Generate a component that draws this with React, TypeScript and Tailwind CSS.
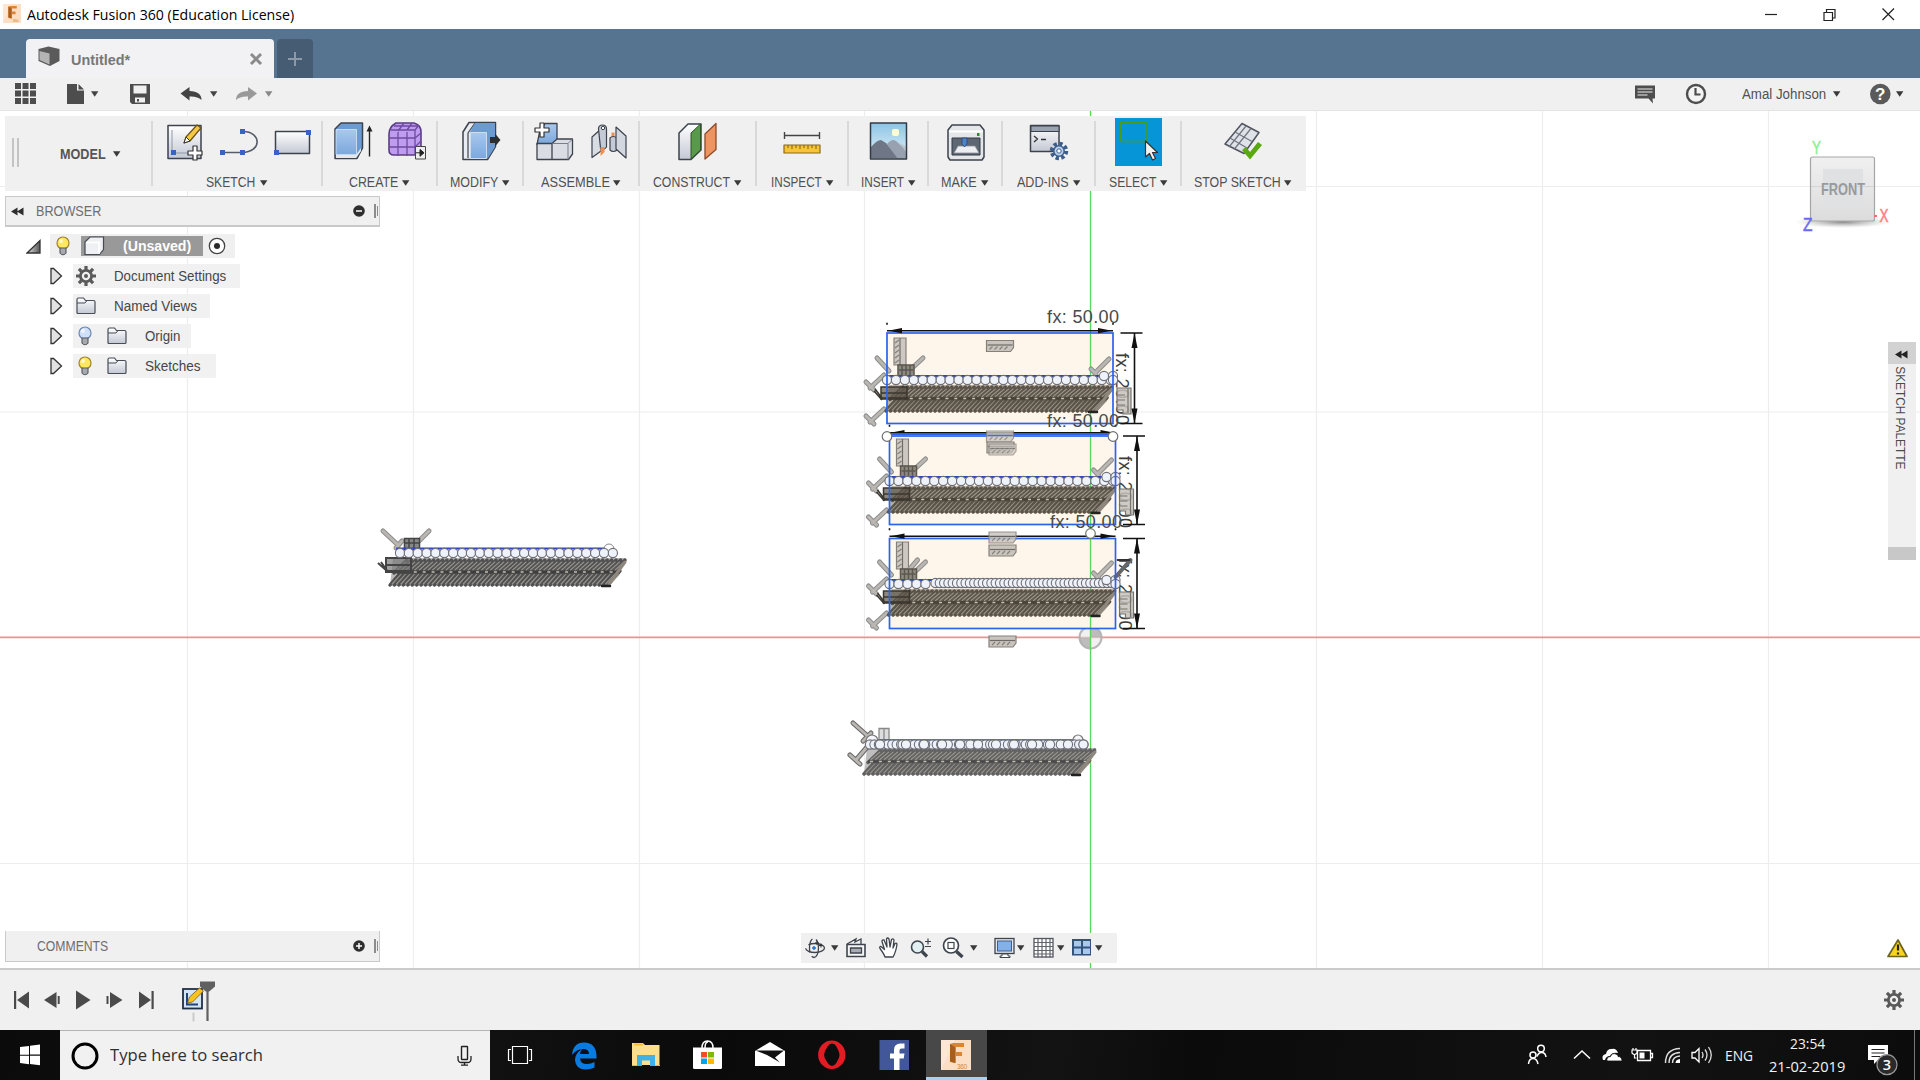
import React, { useLayoutEffect, useRef, useState } from "react";

const ARIAL = "font-['Liberation_Sans',sans-serif]";
const SEGOE = "font-['Open_Sans',sans-serif]";

/* Text condensed or widened to an exact advance width. */
function Fit({ w, className = "", children }: { w: number; className?: string; children: string }) {
  const ref = useRef<HTMLSpanElement>(null);
  const [s, setS] = useState(1);
  useLayoutEffect(() => {
    if (ref.current) setS(w / ref.current.offsetWidth);
  }, [w]);
  return (
    <span className={"block shrink-0 whitespace-nowrap " + className} style={{ width: w }}>
      <span ref={ref} className="inline-block origin-left" style={{ transform: `scaleX(${s})` }}>
        {children}
      </span>
    </span>
  );
}

type IcProps = { x: number; y: number; w: number; h: number; className?: string; children: React.ReactNode };
function Ic({ x, y, w, h, className = "", children }: IcProps) {
  return (
    <svg width={w} height={h} viewBox={`${x} ${y} ${w} ${h}`} className={"block shrink-0 " + className}>
      {children}
    </svg>
  );
}

function Caret({ className = "text-[#3a3a3a]" }: { className?: string }) {
  return (
    <svg width="8" height="6" viewBox="0 0 8 6" className={"block shrink-0 " + className}>
      <path d="M0 0.3H7.4L3.7 5.8Z" fill="currentColor" />
    </svg>
  );
}

function Defs() {
  return (
    <svg width="0" height="0" className="absolute">
      <defs>
        <linearGradient id="gGray" x1="0" y1="0" x2="0" y2="1">
          <stop offset="0" stopColor="#fff" />
          <stop offset="1" stopColor="#c3c8d4" />
        </linearGradient>
        <linearGradient id="gBlue" x1="0" y1="0" x2="0" y2="1">
          <stop offset="0" stopColor="#a9c8ee" />
          <stop offset="1" stopColor="#7ba8dc" />
        </linearGradient>
        <linearGradient id="gCube" x1="0" y1="0" x2="0" y2="1">
          <stop offset="0" stopColor="#f0f0f0" />
          <stop offset="1" stopColor="#dcdcdc" />
        </linearGradient>
        <linearGradient id="gSky" x1="0" y1="0" x2="0" y2="1">
          <stop offset="0" stopColor="#8cc4e6" />
          <stop offset="1" stopColor="#e6f3f8" />
        </linearGradient>
        <linearGradient id="gTri" x1="0" y1="0" x2="1" y2="0">
          <stop offset="0" stopColor="#e5e5e5" />
          <stop offset="1" stopColor="#555" />
        </linearGradient>
        <radialGradient id="gShadow">
          <stop offset="0" stopColor="#555" stopOpacity="0.7" />
          <stop offset="1" stopColor="#999" stopOpacity="0" />
        </radialGradient>
      </defs>
    </svg>
  );
}

/* ---------- sketch canvas ---------- */

function Capsule({ d, c = "#8d8d8d", o = 1 }: { d: string; c?: string; o?: number }) {
  return (
    <g fill="none" strokeLinecap="round" opacity={o}>
      <path d={d} stroke={c} strokeWidth="5" />
      <path d={d} stroke="#bab7b2" strokeWidth="3" />
    </g>
  );
}

function Mass({ x0, x1, top, bottom, color, dash }: { x0: number; x1: number; top: number; bottom: number; color: string; dash: string }) {
  const mid = (top + bottom) / 2;
  const rows: React.ReactNode[] = [];
  for (let x = x0; x < x1 - 14; x += 4.45) {
    const k = Math.round((x - x0) / 4.45);
    rows.push(
      <g key={k}>
        <path d={`M${x} ${bottom - 2}L${x + 12} ${mid - 1}`} stroke={color} strokeWidth="3.4" />
        <path d={`M${x + 2} ${bottom - 3}L${x + 11} ${mid + 2.5}`} stroke="#aaa59c" strokeWidth="1.1" opacity="0.8" />
        <path d={`M${x + 4} ${mid + 1}L${x + 17} ${top + 3}`} stroke={color} strokeWidth="3.4" />
        <path d={`M${x + 7} ${mid - 2}L${x + 16} ${top + 5}`} stroke="#aaa59c" strokeWidth="1.1" opacity="0.8" />
      </g>
    );
  }
  return (
    <g strokeLinecap="round">
      <path d={`M${x0 + 3} ${top + 1}H${x1}L${x1 - 17} ${bottom - 1}H${x0}Z`} fill={color} opacity="0.4" />
      {rows}
      <path d={`M${x0 + 4} ${mid}H${x1 - 10}`} stroke={dash} strokeWidth="2.4" strokeLinecap="butt" opacity="0.8" />
      <path d={`M${x0 + 6} ${mid}H${x1 - 10}`} stroke="#c4bfb5" strokeWidth="1.4" strokeLinecap="butt" strokeDasharray="3 5.9" />
      <path d={`M${x1 - 1} ${top + 5}L${x1 - 17} ${bottom - 3}`} stroke="#8d877d" strokeWidth="3" />
      <path d={`M${x1 - 24} ${bottom - 1}h8`} stroke="#222" strokeWidth="2.5" />
    </g>
  );
}

function Horiz({ x, y, o = 1 }: { x: number; y: number; o?: number }) {
  return (
    <g opacity={o} stroke="#85807a" strokeWidth="1.2">
      <path d={`M${x} ${y}h27v7l-3 4h-24z`} fill="#c9c5be" />
      <path d={`M${x + 1} ${y + 4.5}h25`} stroke="#6f6b66" />
      <path d={`M${x + 3} ${y + 9}l3-3M${x + 8} ${y + 9}l3-3M${x + 13} ${y + 9}l3-3M${x + 18} ${y + 9}l3-3`} />
    </g>
  );
}

function Vert({ x, y, h }: { x: number; y: number; h: number }) {
  const t: string[] = [];
  for (let i = 3; i < h - 2; i += 5) t.push(`M${x + 1} ${y + i + 2}l4-3`);
  return (
    <g stroke="#85807a" strokeWidth="1.2">
      <path d={`M${x} ${y}h12v${h}h-12z`} fill="#cdc9c2" />
      <path d={`M${x + 6} ${y}v${h}`} stroke="#6f6b66" />
      <path d={t.join("")} />
    </g>
  );
}

function Row({ from, to, y, step, r = 4.6 }: { from: number; to: number; y: number; step: number; r?: number }) {
  const out: React.ReactNode[] = [];
  for (let x = from; x <= to + 0.5; x += step) out.push(<circle key={x} cx={x} cy={y} r={r} />);
  return (
    <g fill="#eef2fb" stroke="#6f6f76" strokeWidth="1.1">
      {out}
    </g>
  );
}

/* One constrained rectangle with its dimensions and constraint glyphs. */
function Block({ x, top, bottom, row, dense, tx, ty }: { x: number; top: number; bottom: number; row: number; dense?: boolean; tx: number; ty: number }) {
  const r = x + 226;
  const dx = x === 887 ? 1134.5 : 1137;
  const ay = row === 481 ? 432.7 : top - 2.3;
  return (
    <g>
      <rect x={x} y={top} width="226" height={bottom - top} fill="#fff6eb" />
      <path d={`M1090.5 ${top}V${bottom}`} stroke="#59d959" strokeWidth="1.3" />
      <text transform={`translate(${r + 3} ${top + 20}) rotate(90)`} textLength="72" className={ARIAL} fontSize="18" fill="#3c3c3c">fx: 20.00</text>
      <Vert x={x + 7} y={row - 42} h={27} />
      <Capsule d={`M${x - 10} ${row - 22}l12 13`} />
      <Capsule d={`M${x + 36} ${row - 22}l-14 13`} />
      {dense && <Capsule d={`M${x + 28} ${row - 24}l-12 14`} />}
      <Capsule d={`M${r - 4} ${row - 21}l-14 14M${r - 22} ${row - 11}l5 5`} />
      <g stroke="#5c5850" strokeWidth="1.5" fill="#8f8a80">
        <path d={`M${x + 11} ${row - 15}h16v11h-16z`} />
        <path d={`M${x + 15} ${row - 15}v11M${x + 19} ${row - 15}v11M${x + 23} ${row - 15}v11M${x + 12} ${row - 10}h14`} />
      </g>
      <Capsule d={`M${x - 3} ${row - 5}l-14 13M${x - 21} ${row + 2}l8 8`} />
      <Capsule d={`M${x - 3} ${row + 29}l-14 13M${x - 21} ${row + 36}l8 8`} />
      <Mass x0={x - 1} x1={r} top={row + 4} bottom={row + 33} color="#5b5347" dash="#453e34" />
      <g stroke="#3b3731" fill="none" strokeWidth="1.5">
        <path d={`M${x - 6} ${row + 7}h26v12h-26z`} fill="#5b5347" fillOpacity=".7" />
        <path d={`M${x - 12} ${row + 9}l7 9h25M${x - 6} ${row + 13}h26M${x - 13} ${row + 11}l8 9`} />
      </g>
      <path d={`M${x} ${row - 4}H${r}`} stroke="#2c45c8" strokeWidth="2" />
      {dense ? (
        <>
          <Row from={x} to={x + 42} y={row} step={9} />
          <Row from={x + 46} to={r} y={row - 1} step={4.3} />
        </>
      ) : (
        <Row from={x} to={r} y={row} step={8.95} />
      )}
      <g fill="#eef2fb" stroke="#6f6f76" strokeWidth="1.1">
        <circle cx={r - 9} cy={row - 4} r="4.6" />
        <circle cx={r} cy={row - 4} r="4.6" />
        <circle cx={r} cy={row} r="4.6" />
      </g>
      <g stroke="#77736d" strokeWidth="1.2" fill="#c5c1bb">
        <path d={`M${r + 4} ${row + 8}h14v26h-8v-4h-6z`} fillOpacity=".85" />
        <path d={`M${r + 15} ${row + 8}v25M${r + 4} ${row + 15}h8M${r + 4} ${row + 20}h8M${r + 4} ${row + 25}h8`} />
      </g>
      {dense && (
        <g strokeLinecap="round">
          <path d={`M${r + 15} ${row - 24}l-15 17`} stroke="#666" strokeWidth="4" />
          <path d={`M${r + 2} ${row - 24}h12`} stroke="#333" strokeWidth="2" />
        </g>
      )}
      <rect x={x} y={top} width="226" height={bottom - top} fill="none" stroke="#2d62f0" strokeWidth="1.7" />
      <g stroke="#111" strokeWidth="1.6" fill="#111">
        <path d={`M${x} ${ay}H${r}`} />
        <path d={`M${x + 1} ${ay}l14-2.6v5.2zM${r - 1} ${ay}l-14-2.6v5.2z`} stroke="none" />
        <path d={`M${dx} ${top}V${bottom}M${dx - 14} ${top}h22M${dx - 14} ${bottom}h22`} />
        <path d={`M${dx} ${top}l-3 15h6zM${dx} ${bottom}l-3-15h6z`} stroke="none" />
        <path d={`M${x} ${ay - 8}v2M${r} ${ay - 8}v2`} />
      </g>
      <text x={tx} y={ty} textLength="72" className={ARIAL} fontSize="18" fill="#4a4a4a">fx: 50.00</text>
    </g>
  );
}

function Canvas() {
  return (
    <svg width="1920" height="857" viewBox="0 111 1920 857" className="absolute inset-0 block">
      <rect x="0" y="111" width="1920" height="857" fill="#fff" />
      <path
        d="M187.5 111V968M413.5 111V968M639.5 111V968M864.5 111V968M1316.5 111V968M1542.5 111V968M1768.5 111V968M0 186.5H1920M0 412H1920M0 863.5H1920"
        stroke="#ededed"
        strokeWidth="1.2"
      />
      <path d="M1090.5 111V968" stroke="#59d959" strokeWidth="1.3" />
      <path d="M0 637.3H1920" stroke="#e89494" strokeWidth="1.8" />
      <g opacity=".9">
        <circle cx="1090.5" cy="637.5" r="11" fill="#ececec" fillOpacity=".8" stroke="#b0b0b0" strokeWidth="2" />
        <path d="M1090.5 637.5V627A11 11 0 0 1 1101.5 637.500ZM1090.5 637.500V648.500A11 11 0 0 1 1079.5 637.500Z" fill="#a8a8a8" opacity=".8" />
      </g>
      <path d="M1090.5 626V650" stroke="#59d959" strokeWidth="1.3" />

      <Block x={887} top={333} bottom={423.5} row={380} tx={1047} ty={323} />
      <Horiz x={986.5} y={340.5} />
      <Block x={889.5} top={436} bottom={524.5} row={481} tx={1047} ty={426.5} />
      <path d="M887 434H1113" stroke="#2d62f0" strokeWidth="2" />
      <g fill="#fff" stroke="#6f6f76" strokeWidth="1.2">
        <circle cx="887" cy="436.5" r="4.8" />
        <circle cx="1113" cy="436.5" r="4.8" />
      </g>
      <Horiz x={986.5} y={431} o={0.8} />
      <Horiz x={987} y={442} />
      <Horiz x={989} y={444} o={0.7} />
      <Block x={889.5} top={538.5} bottom={628.5} row={584} dense tx={1050} ty={528} />
      <Horiz x={989} y={532} o={0.85} />
      <Horiz x={989} y={545} />
      <Horiz x={989} y={636} />
      <circle cx="1090.5" cy="533.5" r="4.8" fill="#fff" stroke="#6c7a6c" strokeWidth="1.2" />

      <Capsule d="M383 531l15 14M396 548l6-7" />
      <Capsule d="M429 531l-12 12" />
      <g stroke="#444" strokeWidth="1.5" fill="#888">
        <path d="M404.500 538.500h15v11h-15zM409 538v11M414 538v11M405 543h14" />
      </g>
      <Mass x0={390} x1={626} top={557} bottom={587} color="#505050" dash="#3a3a3a" />
      <g fill="none" stroke="#444" strokeWidth="2">
        <path d="M386 558h25v14h-25z" fill="#777" fillOpacity=".7" />
        <path d="M378 563l9 8h24M386 565h25M381 562l7 10" />
      </g>
      <path d="M396 548.500H607" stroke="#2c45c8" strokeWidth="2" />
      <circle cx="609" cy="549" r="5" fill="#fff" stroke="#888" />
      <Row from={400} to={614} y={553} step={8.87} />

      <Capsule d="M853 723l18 16M863 741l8-8" c="#666" />
      <Capsule d="M868 746l-12 14M850 755l10 9" c="#666" />
      <path d="M879 728.500h10v12h-10zM884 729v11" fill="#ddd" stroke="#888" strokeWidth="1.3" />
      <Mass x0={864} x1={1096} top={747} bottom={776} color="#606060" dash="#444" />
      <path d="M880 740H1076" stroke="#2c45c8" strokeWidth="1.6" />
      <g fill="#f4f6fb" stroke="#777" strokeWidth="1.2">
        <circle cx="872" cy="741" r="6" />
        <circle cx="1078" cy="740" r="5" />
      </g>
      <Row from={870} to={1084} y={744.5} step={4.45} />
      <Row from={880} to={1084} y={744.5} step={22.6} />
      <Row from={906} to={1084} y={744.5} step={18} />
    </svg>
  );
}

function ViewCube() {
  return (
    <svg width="100" height="110" viewBox="1796 132 100 110" className="absolute left-[1796px] top-[21px] block">
      <ellipse cx="1843" cy="222" rx="48" ry="6" fill="url(#gShadow)" />
      <rect x="1810.500" y="157" width="64" height="64" rx="2" fill="url(#gCube)" stroke="#a5a5a5" strokeWidth="1.2" />
      <rect x="1823" y="169" width="40" height="39" fill="#dfe1e3" />
      <path d="M1811 186.500h63" stroke="#d4d4d4" />
      <g className={ARIAL} fontWeight="bold">
        <text x="1821" y="195" fontSize="16.500" fill="#979a9e" textLength="44" lengthAdjust="spacingAndGlyphs">FRONT</text>
      </g>
      <g className={ARIAL} fontSize="18">
        <text x="1812" y="154" fill="#8df08d" stroke="#8df08d" strokeWidth=".5" textLength="9" lengthAdjust="spacingAndGlyphs">Y</text>
        <text x="1879.500" y="222" fill="#ff8080" stroke="#ff8080" strokeWidth=".5" textLength="9" lengthAdjust="spacingAndGlyphs">X</text>
        <text x="1803" y="231" fill="#6a6af0" stroke="#6a6af0" strokeWidth=".5" textLength="9.500" lengthAdjust="spacingAndGlyphs">Z</text>
      </g>
      <path d="M1874 216h3" stroke="#f66" strokeWidth="2" />
    </svg>
  );
}

/* ---------- ribbon ---------- */

function R({ x, w, className = "", children }: { x: number; w: number; className?: string; children: React.ReactNode }) {
  return (
    <Ic x={x} y={118} w={w} h={48} className={className}>
      <g strokeLinejoin="round">{children}</g>
    </Ic>
  );
}

function Group({ width, label, lw, children, last }: { width: string; label: string; lw: number; children: React.ReactNode; last?: boolean }) {
  return (
    <div className={`${width} relative flex shrink-0 flex-col`}>
      {!last && <span className="absolute right-0 top-[5px] h-[65px] w-[2px] bg-[#d9d9d9]" />}
      <div className="mt-[2px] flex h-12">{children}</div>
      <div className="mt-[4px] flex h-[25px] items-center justify-center gap-[4px] pr-[2px] pt-[2px]">
        <Fit w={lw} className={`${ARIAL} text-[14px] text-[#505050]`}>{label}</Fit>
        <Caret />
      </div>
    </div>
  );
}

function Ribbon() {
  const k = "#3d434d";
  return (
    <div className="ml-[5px] mt-[5px] flex h-[75px] w-[1301px] shrink-0 bg-[#f0f0f0]">
      <div className="relative flex w-[148px] shrink-0 items-center">
        <span className="ml-[7px] mb-[2px] h-[29px] w-[2px] bg-[#c4c4c4]" />
        <span className="ml-[3px] mb-[2px] h-[29px] w-[2px] bg-[#c4c4c4]" />
        <Fit w={46} className={`${ARIAL} ml-[41px] mt-[2px] text-[14px] font-bold text-[#555]`}>MODEL</Fit>
        <Caret className="ml-[7px] text-[#3a3a3a]" />
        <span className="absolute right-0 top-[5px] h-[65px] w-[2px] bg-[#d9d9d9]" />
      </div>
      <Group width="w-[170px]" label="SKETCH" lw={49.5}>
        <R x={165} w={40} className="ml-[12px]">
          <rect x="168" y="125.500" width="33" height="33" fill="url(#gGray)" stroke={k} strokeWidth="1.500" />
          <path d="M172 130v23h20" fill="none" stroke="#8f98aa" />
          <path d="M171 150h5v5h-5z" fill="#3465c0" />
          <path d="M184 143l2-6 11-12 4 3-11 13z" fill="#f5c842" stroke="#6b4f18" strokeWidth="1.200" />
          <path d="M184 143l2-6 4 4z" fill="#fff" stroke="#333" />
          <path d="M193 146h4v5h5v4h-5v5h-4v-5h-5v-4h5z" fill="#fff" stroke="#333" strokeWidth="1.200" />
        </R>
        <R x={218} w={42} className="ml-[13px]">
          <path d="M222 152.500h20c20 0 20-21 1-21" fill="none" stroke="#555d68" strokeWidth="1.600" />
          <path d="M220 150h5v5h-5zM240 150h5v5h-5zM240 129h5v5h-5z" fill="#3465c0" />
        </R>
        <R x={271} w={44} className="ml-[11px]">
          <rect x="275.500" y="131.500" width="34" height="22" fill="url(#gGray)" stroke={k} strokeWidth="1.500" />
          <path d="M306 130h5v5h-5zM274 150h5v5h-5z" fill="#3465c0" />
        </R>
      </Group>
      <Group width="w-[115px]" label="CREATE" lw={49.5}>
        <R x={332} w={44} className="ml-[9px]">
          <path d="M335 129l6-6h21.500v25l-5.500 10.500h-22z" fill="#6c9bd2" stroke={k} strokeWidth="1.500" />
          <path d="M336 129.500h20.500v25h-20.500z" fill="url(#gBlue)" stroke="#d7e6f8" strokeWidth=".8" />
          <path d="M336 155h20l5-7v3l-5 7h-20z" fill="#e6e8ec" />
          <path d="M369.500 156.500v-27" stroke="#222" strokeWidth="1.400" />
          <path d="M366.500 131.500l3-6 3 6z" fill="#222" />
        </R>
        <R x={386} w={42} className="ml-[10px]">
          <path d="M389 134q0-7 7-11h18q7 2 7 9v14l-5 9h-22q-5 0-5-5z" fill="#bf9cf0" stroke="#5a3c84" strokeWidth="1.600" />
          <path d="M389 138h26l6-5M389 147h26l6-6M398 132v24M407 132v24M391 130h24v25M398 131l6-8M407 130l5-7M415 130l4-5M394 126h24" fill="none" stroke="#6f4aa0" strokeWidth="1.300" />
          <rect x="415.500" y="146.500" width="10" height="12.500" fill="#eee" stroke="#444" />
          <path d="M416 152.800h4M420 149.500l4 3.300-4 3.500z" fill="#222" stroke="#222" />
        </R>
      </Group>
      <Group width="w-[86px]" label="MODIFY" lw={48}>
        <R x={458} w={46} className="ml-[20px]">
          <path d="M463 132l6-9.500h26.500v24l-8 13h-24.500z" fill="#e9ecf1" stroke={k} strokeWidth="1.500" />
          <path d="M468 158l0-25 7-10" fill="none" stroke={k} strokeWidth="1.200" />
          <path d="M470 132l5-9h20v24l-7 11h-18z" fill="#6c9bd2" />
          <path d="M470.500 132.500h16v26h-16z" fill="url(#gBlue)" stroke="#dce9fa" strokeWidth=".8" />
          <path d="M490 137h5v-3.500l5.500 6.500-5.500 6.500v-3.500h-5z" fill="#2e2e2e" />
        </R>
      </Group>
      <Group width="w-[116px]" label="ASSEMBLE" lw={68.5}>
        <R x={533} w={44} className="ml-[9px]">
          <path d="M540 130l5-6.500h12v16l-2 5h-18z" fill="url(#gBlue)" stroke={k} strokeWidth="1.300" />
          <path d="M537 143.500h15v16h-15zM552 143.500l5-4.500h15.500v15l-4 5.500h-16.500z" fill="#dadde4" stroke={k} strokeWidth="1.300" />
          <path d="M552.500 143.500h15.500v16M568 143.500l4-4" fill="none" stroke="#777e8a" />
          <path d="M540 123h4v5h5v4h-5v5h-4v-5h-5v-4h5z" fill="#fff" stroke="#333" strokeWidth="1.200" />
        </R>
        <R x={589} w={42} className="ml-[12px]">
          <path d="M592 137l9-8v22l-9 6.500z" fill="#d8dce3" stroke={k} strokeWidth="1.200" />
          <path d="M598.500 129q0-4 4-4t4 4v18q-3 4-6 1z" fill="#c5cbd6" stroke={k} strokeWidth="1.200" />
          <circle cx="603" cy="128" r="1.700" fill="#fff" stroke={k} />
          <path d="M600.500 147h4v5l-4 4zM611.500 132.500h3v6h-3z" fill="#ee8f4e" />
          <path d="M610 138q3-3 7 0v12q-4 3-7 0z" fill="#c5cbd6" stroke={k} strokeWidth="1.200" />
          <path d="M616 127l10 9v22l-10-9z" fill="#d3d7df" stroke={k} strokeWidth="1.200" />
        </R>
      </Group>
      <Group width="w-[117px]" label="CONSTRUCT" lw={77}>
        <R x={676} w={44} className="ml-[36px]">
          <path d="M679 133l9-9h13v26l-10 9.500h-12z" fill="url(#gGray)" stroke={k} strokeWidth="1.500" />
          <path d="M691 133l9.500-9v26l-9.500 9z" fill="#59994a" stroke="#2c5722" />
          <path d="M705 134l11-10.500v26l-11 9.500z" fill="#ee9461" stroke="#8c4a2a" strokeWidth="1.300" />
        </R>
      </Group>
      <Group width="w-[92px]" label="INSPECT" lw={51}>
        <R x={780} w={44} className="ml-[23px]">
          <path d="M784.500 132v7M819.500 132v7M784 135.500h36" stroke="#444" strokeWidth="1.400" />
          <rect x="784" y="145" width="36" height="8" fill="#f7c436" stroke="#8a6a1c" strokeWidth="1.200" />
          <path d="M788 145v3M792 145v4M796 145v3M800 145v4M804 145v3M808 145v4M812 145v3M816 145v4" stroke="#7c5f14" />
        </R>
      </Group>
      <Group width="w-[80px]" label="INSERT" lw={43}>
        <R x={868} w={42} className="ml-[19px]">
          <rect x="870.500" y="123" width="36" height="36" fill="url(#gSky)" />
          <rect x="892" y="129" width="7" height="7" rx="2" fill="#fffbd8" />
          <path d="M871 147q6-7 10-7l5 3 13 15.500h-28z" fill="#6f7787" />
          <path d="M887 144q5-6 9-3l10 9v9h-8z" fill="#98a1b0" />
          <path d="M899 142l7 5v5z" fill="#bcc4ce" />
          <rect x="870.500" y="123" width="36" height="36" fill="none" stroke="#333b46" strokeWidth="1.500" />
        </R>
      </Group>
      <Group width="w-[74px]" label="MAKE" lw={36}>
        <R x={945} w={42} className="ml-[16px]">
          <path d="M948 130l4-5h28l4 5v27l-2 3h-32l-2-3z" fill="#e4e6ea" stroke={k} strokeWidth="1.500" />
          <path d="M949 131.500h34" stroke="#fff" strokeWidth="2" />
          <path d="M977 133h2.500v3h-2.500z" fill="#2f8a2f" />
          <rect x="952" y="138" width="28" height="17" fill="#5d6673" stroke="#343a44" />
          <path d="M958 146h17l4 7h-25z" fill="#eceef2" stroke="#8a909a" strokeWidth=".8" />
          <path d="M962 138h5v6l-2.500 3-2.500-3z" fill="#4e83c9" stroke="#27497a" strokeWidth=".8" />
        </R>
      </Group>
      <Group width="w-[93px]" label="ADD-INS" lw={52}>
        <R x={1027} w={44} className="ml-[24px]">
          <rect x="1030.500" y="125.500" width="28.500" height="26" fill="url(#gGray)" stroke={k} strokeWidth="1.500" />
          <path d="M1031 126h28v5.500h-28z" fill="#9aa1b0" stroke={k} />
          <path d="M1034 136l3.500 3-3.500 3M1041 139.500h5" fill="none" stroke="#333" strokeWidth="1.300" />
          <circle cx="1059" cy="151" r="7" fill="none" stroke="#3c5d8b" strokeWidth="4.500" strokeDasharray="3.200 2.300" />
          <circle cx="1059" cy="151" r="5.200" fill="#bcd4ee" stroke="#3c5d8b" strokeWidth="1.500" />
          <circle cx="1059" cy="151" r="2.200" fill="#fff" stroke="#3c5d8b" />
        </R>
      </Group>
      <Group width="w-[86px]" label="SELECT" lw={47}>
        <R x={1115} w={47} className="ml-[19px] bg-[#0696d7]">
          <rect x="1120.500" y="122.500" width="25.500" height="19" fill="none" stroke="#4c9a1c" strokeWidth="1.600" />
          <path d="M1145.500 141v16l4-3.500 3 6.500 3-1.500-3-6h5z" fill="#f2f2f2" stroke="#333" strokeWidth="1.200" />
        </R>
      </Group>
      <Group width="w-[124px]" label="STOP SKETCH" lw={86.5} last>
        <R x={1222} w={44} className="ml-[39px]">
          <path d="M1226 144l17-20.500 17 9-15 21z" fill="#dfe2e9" stroke="#50555f" strokeWidth="1.500" />
          <path d="M1230 147l17-21M1235 149.500l17-21M1231 138l17 10M1236 132l17 9.500" fill="none" stroke="#70757f" strokeWidth="1.200" />
          <path d="M1243 150l4-3 4 5 8-10 4 3-12 14.500z" fill="#5aa80f" />
        </R>
      </Group>
    </div>
  );
}

/* ---------- browser ---------- */

function Bulb({ on }: { on: boolean }) {
  return (
    <Ic x={0} y={0} w={14} h={20}>
      <circle cx="7" cy="7" r="6" fill={on ? "#ffe85e" : "#cfe0fb"} stroke={on ? "#a08428" : "#6f87ae"} strokeWidth="1.200" />
      <path d="M4 12h6v5q-3 3.500-6 0z" fill="#a6a9ad" stroke="#55585c" strokeWidth="1.100" />
      <circle cx="5" cy="5" r="2" fill="#fff" opacity=".7" />
    </Ic>
  );
}
function Folder() {
  return (
    <Ic x={0} y={0} w={20} h={18}>
      <path d="M1 2.500q0-1.500 1.500-1.500h5l2 2.500h8q1.500 0 1.500 1.500v10.500q0 1-1 1h-16q-1 0-1-1z" fill="url(#gGray)" stroke="#474d57" strokeWidth="1.200" />
      <path d="M1 6h8l2-2.500" fill="none" stroke="#474d57" />
    </Ic>
  );
}
function Gear({ size }: { size: number }) {
  return (
    <svg width={size} height={size} viewBox="0 0 20 20" className="block shrink-0">
      <path d="M10 0v4M10 16v4M0 10h4M16 10h4M2.900 2.900l3 3M14.100 14.100l3 3M17.100 2.900l-3 3M5.900 14.100l-3 3" stroke="#5a5a5a" strokeWidth="3.200" />
      <circle cx="10" cy="10" r="5.600" fill="#f0f0f0" stroke="#5a5a5a" strokeWidth="2.800" />
      <circle cx="10" cy="10" r="2" fill="#5a5a5a" />
    </svg>
  );
}
function Expander() {
  return (
    <Ic x={0} y={0} w={13} h={18}>
      <path d="M1 1.500h2.500l8 7.500-8 7.500h-2.500z" fill="#e2e2e2" stroke="#333" strokeWidth="1.300" />
    </Ic>
  );
}
function TreeRow({ width, children }: { width: string; children: React.ReactNode }) {
  return (
    <div className="flex h-6 items-center">
      <div className="ml-[45px] w-[23px]"><Expander /></div>
      <div className={`${width} flex h-full items-center bg-[#f0f0f0]/95`}>{children}</div>
    </div>
  );
}
const TREE_TEXT = `${ARIAL} text-[14px] text-[#464646]`;

function PanelBars() {
  return (
    <span className="flex gap-[1px]">
      <span className="h-[14px] w-[2px] bg-[#8c8c8c]" />
      <span className="h-[10px] w-[1px] self-center bg-[#8c8c8c]" />
    </span>
  );
}

function Browser() {
  return (
    <div className="ml-[5px] mt-[5px] w-[375px]">
      <div className="flex h-[31px] items-center border border-b-2 border-[#c9c9c9] bg-[#f0f0f0]">
        <Ic x={0} y={0} w={13} h={9} className="ml-[5px]">
          <path d="M6.500 .5v8L0 4.500zM12.500 .5v8L6 4.500z" fill="#2e2e2e" />
        </Ic>
        <Fit w={65} className={`${ARIAL} ml-[12px] text-[14px] text-[#6e6e6e]`}>BROWSER</Fit>
        <Ic x={0} y={0} w={12} h={12} className="ml-auto mr-[9px]">
          <circle cx="6" cy="6" r="5.800" fill="#2f2f2f" />
          <path d="M3 6h6" stroke="#fff" strokeWidth="1.500" />
        </Ic>
        <PanelBars />
        <span className="w-px" />
      </div>
      <div className="mt-[7px] flex flex-col gap-[6px]">
        <div className="flex h-6 items-center">
          <Ic x={0} y={0} w={15} h={15} className="ml-[21px]">
            <path d="M1 14L14 1.500V14z" fill="url(#gTri)" stroke="#333" strokeWidth="1.300" />
          </Ic>
          <div className="ml-[9px] flex h-full w-[185px] items-center bg-[#f0f0f0]">
            <div className="ml-[6px]"><Bulb on /></div>
            <div className="ml-[11px] flex h-[20px] w-[122px] items-center bg-[#999]">
              <Ic x={0} y={0} w={21} h={20} className="ml-[3px]">
                <path d="M1 6l5-5h13.500v12.500l-4 5h-14.500z" fill="#eef0f3" stroke="#444b55" strokeWidth="1.200" />
                <path d="M2 6.500h13v11.500" fill="none" stroke="#fff" strokeWidth="1.500" />
              </Ic>
              <Fit w={68.5} className={`${ARIAL} ml-[18px] text-[14px] font-bold text-white`}>(Unsaved)</Fit>
            </div>
            <Ic x={0} y={0} w={18} h={18} className="ml-[5px]">
              <circle cx="9" cy="9" r="7.700" fill="#fff" stroke="#444" strokeWidth="1.300" />
              <circle cx="9" cy="9" r="3" fill="#2b2b2b" />
            </Ic>
          </div>
        </div>
        <TreeRow width="w-[167px]">
          <div className="ml-[3px]"><Gear size={20} /></div>
          <Fit w={112} className={`${TREE_TEXT} ml-[18px]`}>Document Settings</Fit>
        </TreeRow>
        <TreeRow width="w-[137px]">
          <div className="ml-[3px]"><Folder /></div>
          <Fit w={83} className={`${TREE_TEXT} ml-[18px]`}>Named Views</Fit>
        </TreeRow>
        <TreeRow width="w-[118px]">
          <div className="ml-[5px]"><Bulb on={false} /></div>
          <div className="ml-[15px]"><Folder /></div>
          <Fit w={35} className={`${TREE_TEXT} ml-[18px]`}>Origin</Fit>
        </TreeRow>
        <TreeRow width="w-[143px]">
          <div className="ml-[5px]"><Bulb on /></div>
          <div className="ml-[15px]"><Folder /></div>
          <Fit w={56} className={`${TREE_TEXT} ml-[18px]`}>Sketches</Fit>
        </TreeRow>
      </div>
    </div>
  );
}

function NavBar() {
  const s = "#3f454e";
  return (
    <div className="ml-[421px] mt-[2px] flex h-[30px] w-[316px] shrink-0 items-center bg-[#f0f0f0]">
      <Ic x={804} y={937} w={22} h={22} className="ml-[3px]">
        <ellipse cx="815" cy="948" rx="9.500" ry="4.500" fill="none" stroke={s} strokeWidth="1.300" strokeDasharray="22 5" />
        <ellipse cx="814" cy="948" rx="4.500" ry="9.500" fill="none" stroke={s} strokeWidth="1.300" strokeDasharray="14 4" />
        <path d="M812 948h4M814 946v4" stroke="#1f6fd0" strokeWidth="1.400" />
        <path d="M815 943h4M817 941v4M819 945.500h4M821 943.500v4" stroke="#333" strokeWidth="1" />
      </Ic>
      <Caret className="ml-[5px] text-[#3a3a3a]" />
      <Ic x={845} y={937} w={22} h={22} className="ml-[6px]">
        <path d="M847 944.500h18v12h-18z" fill="#f6f6f6" stroke={s} strokeWidth="1.600" />
        <path d="M850.500 948h11v5h-11z" fill="#a9adb3" stroke={s} strokeWidth="1.300" />
        <path d="M847 944l9-5-1 3 6-3v5" fill="none" stroke={s} strokeWidth="1.300" />
      </Ic>
      <Ic x={878} y={937} w={22} h={22} className="ml-[11px]">
        <path d="M885 957q-1-3-5-8.500-1-2 1-2l3.500 3-2.500-8q0-2 2-1.500l3 7-.5-8q1-2 2.500 0l1 8 1.500-7.500q1.500-1.500 2.500.5l-1 8 2-4.500q1.500-1 2 .5-1 8-4 13z" fill="#fff" stroke={s} strokeWidth="1.300" strokeLinejoin="round" />
      </Ic>
      <Ic x={910} y={937} w={23} h={22} className="ml-[10px]">
        <circle cx="917.500" cy="947" r="6" fill="#e2f0f3" stroke={s} strokeWidth="1.600" />
        <path d="M922 951.500l5 5" stroke={s} strokeWidth="3.200" />
        <path d="M925 941.500h6M928 938.500v6M925 946.500h6" stroke={s} strokeWidth="1.200" />
      </Ic>
      <Ic x={942} y={937} w={23} h={22} className="ml-[9px]">
        <circle cx="951" cy="945.500" r="7.500" fill="#fff" stroke={s} strokeWidth="1.700" />
        <rect x="948" y="942.500" width="6" height="6" fill="#fff" stroke={s} strokeWidth="1.200" />
        <path d="M956.500 951.500l6 5.500" stroke={s} strokeWidth="3.400" />
      </Ic>
      <Caret className="ml-[5px] text-[#3a3a3a]" />
      <Ic x={994} y={937} w={22} h={22} className="ml-[16px]">
        <rect x="995" y="938.500" width="19" height="15" fill="#e4e6e9" stroke={s} strokeWidth="1.300" />
        <rect x="997.500" y="941" width="14" height="10" fill="#83b0e6" stroke="#3d5f8c" />
        <path d="M1002 954h6v2h2v1.500h-10v-1.500h2z" fill="#fff" stroke={s} />
      </Ic>
      <Caret className="ml-[1px] text-[#3a3a3a]" />
      <Ic x={1032} y={937} w={22} h={22} className="ml-[7px]">
        <rect x="1034" y="938.500" width="19" height="18.500" fill="#fff" />
        <path d="M1038 938.500v19M1042 938.500v19M1046 938.500v19M1050 938.500v19M1034 942.500h19M1034 946.500h19M1034 950.500h19M1034 954h19" stroke="#61656e" strokeWidth="1.200" />
        <rect x="1034" y="938.500" width="19" height="18.500" fill="none" stroke="#53575f" strokeWidth="1.300" />
      </Ic>
      <Caret className="ml-[3px] text-[#3a3a3a]" />
      <Ic x={1071} y={937} w={22} h={22} className="ml-[6px]">
        <rect x="1072.500" y="939.500" width="18" height="15.500" fill="#35527c" stroke="#35527c" />
        <path d="M1074 941h7v5.500h-7zM1083 941h7v5.500h-7zM1074 948.500h7v5.500h-7zM1083 948.500h7v5.500h-7z" fill="#a9c8ee" />
      </Ic>
      <Caret className="ml-[2px] text-[#3a3a3a]" />
    </div>
  );
}

/* ---------- taskbar ---------- */

function FusionLogo() {
  return (
    <>
      <rect width="30" height="30" fill="#fde6d3" />
      <path d="M0 30L14 0h16v30z" fill="#fbd9bd" opacity=".6" />
      <path d="M9 4l3-1h11v4h-8v5h6v4h-6v7l-6-1z" fill="#d98531" />
      <path d="M9 4l5 3v16l-5-1.500z" fill="#a65f1c" />
      <text x="16" y="28.500" fontSize="6.500" fill="#d98531" textLength="10" className={ARIAL}>360</text>
    </>
  );
}

function Taskbar() {
  const T = (p: { x: number; w?: number; className?: string; children: React.ReactNode }) => (
    <Ic x={p.x} y={1030} w={p.w ?? 34} h={50} className={p.className}>{p.children}</Ic>
  );
  const tiny = `${SEGOE} text-[15px] leading-[20px] text-[#f2f2f2]`;
  return (
    <div className="flex h-[50px] w-full items-stretch bg-[linear-gradient(100deg,#0b0b0b,#141414_20%,#0a0a0a_38%,#131313_55%,#0b0b0b_62%,#121212_85%,#0c0c0c)]">
      <T x={0} w={60}>
        <path d="M20 1047l9-1v8.700h-9zM30 1045.800l10-1.200v10h-10zM20 1055.700h9v8.500l-9-1.200zM30 1055.700h10v9.500l-10-1.200z" fill="#fff" />
      </T>
      <div className="flex w-[430px] items-center border-t border-[#b4b4b4] bg-[#f1f1f1]">
        <Ic x={70} y={1040} w={30} h={30} className="ml-[10px]">
          <circle cx="85" cy="1055" r="12" fill="none" stroke="#000" strokeWidth="3" />
        </Ic>
        <Fit w={152.5} className={`${SEGOE} ml-[10px] mb-[1px] text-[17px] text-[#303030]`}>Type here to search</Fit>
        <Ic x={456} y={1043} w={18} h={24} className="ml-auto mr-[16px]">
          <rect x="461.500" y="1045.500" width="6" height="13" rx=".5" fill="none" stroke="#222" strokeWidth="1.400" />
          <path d="M458 1055v3q0 3.500 3.500 3.500h6q3.500 0 3.500-3.500v-3M464.500 1061.500v3M461 1064.200h7" fill="none" stroke="#222" strokeWidth="1.300" />
        </Ic>
      </div>
      <T x={503} className="ml-[13px]">
        <path d="M512.500 1046.500h15v17h-15zM511 1049.500h-2.500v11h2.500M529 1049.500h2.500v11h-2.500" fill="none" stroke="#fff" strokeWidth="1.200" />
      </T>
      <T x={567} className="ml-[30px]">
        <path d="M572 1055q1-12.500 12-12.500 12.500 0 12.500 14.500v1.500h-16.500q.5 5.500 7 5.500 4 0 7.500-2v5.500q-4 2-9 2-9.500 0-10.500-9-.5-6.500 7-11.500-2 3-2 5h9q0-5-6-5-6.500 0-11 6z" fill="#0a7be0" />
      </T>
      <T x={629} className="ml-[28px]">
        <path d="M632 1043h11l2 2h14.500v20h-27.500z" fill="#fadf8c" />
        <path d="M634 1043.500h9v2h-9z" fill="#f4bd2c" />
        <path d="M637 1066v-11h18v11h-5v-5.500h-8v5.500z" fill="#3fb3e6" />
        <path d="M632 1065.500h5M655 1065.500h5" stroke="#dcb95c" />
      </T>
      <T x={691} className="ml-[28px]">
        <path d="M702 1048q0-7 5.500-7t5.500 7M705 1048q0-6 3-6" fill="none" stroke="#fff" strokeWidth="1.500" />
        <path d="M693 1047.500h29v20q0 1.500-1.500 1.500h-26q-1.500 0-1.500-1.500z" fill="#fff" />
        <path d="M701 1052h6v5.500h-6z" fill="#f25022" />
        <path d="M708 1052h6v5.500h-6z" fill="#7fba00" />
        <path d="M701 1058.500h6v5.500h-6z" fill="#00a4ef" />
        <path d="M708 1058.500h6v5.500h-6z" fill="#ffb900" />
      </T>
      <T x={753} className="ml-[28px]">
        <path d="M755 1051l15-9 15 9v15h-30z" fill="#fff" />
        <path d="M755.500 1050.500h28.500l-9 7 5 5-13-7.500z" fill="#101010" />
      </T>
      <T x={815} className="ml-[28px]">
        <ellipse cx="831.800" cy="1054.700" rx="10.700" ry="11.300" fill="none" stroke="#e31b23" strokeWidth="6" />
        <ellipse cx="832" cy="1054.700" rx="6.500" ry="11.200" fill="#0d0d0d" />
      </T>
      <T x={877} className="ml-[28px]">
        <rect x="879.500" y="1040" width="29.500" height="30" fill="#42579a" />
        <path d="M894 1070v-11.500h-4v-5h4v-3.500q0-6.500 6.500-6.500h4v5h-3q-2 0-2 2v3h5l-.8 5h-4.200v11.500z" fill="#fff" />
      </T>
      <div className="ml-[15px] flex w-[61px] items-center justify-center border-b-[3px] border-[#a5d2f2] bg-[#484848]">
        <svg width="30" height="30" viewBox="0 0 30 30" className="mr-[1px] mt-[3px] block"><FusionLogo /></svg>
      </div>
      <T x={1524} w={26} className="ml-auto">
        <g fill="none" stroke="#fff" strokeWidth="1.500">
          <circle cx="1541" cy="1048.500" r="3.300" />
          <circle cx="1533" cy="1055" r="3" />
          <path d="M1537 1056.500q1.500-4 4.500-4 4 0 4.500 4.500M1528.500 1064q.5-5.500 4.500-5.500t5 5.500" />
        </g>
      </T>
      <T x={1570} w={24} className="ml-[20px]">
        <path d="M1574 1058.500l8-7.500 8 7.500" fill="none" stroke="#fff" strokeWidth="1.500" />
      </T>
      <T x={1600} w={26} className="ml-[6px]">
        <path d="M1603 1060q-2-5 3-6 1-5.500 6-5 4-1 6 4-6-1-8 3-4 0-5 4z" fill="#fff" />
        <path d="M1607 1061q-1-4 3.500-4.500 1.500-4.500 6.500-2 1 1 1 2 4 0 4 4.500z" fill="#fff" stroke="#111" strokeWidth=".8" />
      </T>
      <T x={1630} w={26} className="ml-[4px]">
        <path d="M1637.500 1050.500h13v10h-13zM1651 1053.500h1.500v4h-1.500" fill="none" stroke="#fff" strokeWidth="1.300" />
        <path d="M1639.500 1052.500h5v6h-5z" fill="#fff" />
        <path d="M1632 1050h5v3q-2.500 3-5 0zM1633 1048v2M1636 1048v2M1634.500 1054v4h2" fill="#111" stroke="#fff" strokeWidth="1.200" />
      </T>
      <T x={1662} w={22} className="ml-[6px]">
        <g fill="none" stroke="#ddd" strokeWidth="1.400">
          <path d="M1665.500 1063q0-14 14.500-14.500" />
          <path d="M1669 1063q0-10 11-10.500" />
          <path d="M1672.500 1063q0-6.500 7.500-7" />
        </g>
        <path d="M1675.500 1063q0-3.500 4.500-4v4z" fill="#fff" />
      </T>
      <T x={1690} w={24} className="ml-[6px]">
        <path d="M1692 1052.500h3l4-4v13.500l-4-4h-3z" fill="none" stroke="#fff" strokeWidth="1.300" />
        <path d="M1702 1052q2 3 0 6M1705 1049.500q4 5.500 0 11M1708.500 1047q5.500 8 0 16" fill="none" stroke="#ddd" strokeWidth="1.300" />
      </T>
      <Fit w={28.5} className={`${tiny} ml-[11px] self-center`}>ENG</Fit>
      <div className="ml-[16px] flex w-[76px] flex-col items-center gap-[3px] pt-[3px]">
        <Fit w={35} className={tiny}>23:54</Fit>
        <Fit w={76} className={tiny}>21-02-2019</Fit>
      </div>
      <T x={1866} w={36} className="ml-[20px]">
        <path d="M1869 1045h20v15h-10l-4 4v-4h-6z" fill="#fff" />
        <path d="M1872.500 1049.500h13M1872.500 1053h13M1872.500 1056.500h9" stroke="#222" strokeWidth="1.200" />
        <circle cx="1888" cy="1064.700" r="10" fill="#2a2a2a" stroke="#999" strokeWidth="1.200" />
        <text x="1888" y="1070" textAnchor="middle" fontSize="14.500" fontWeight="600" fill="#fff" className={SEGOE}>3</text>
      </T>
      <span className="ml-[13px] mr-[5px] w-px bg-[#777]" />
    </div>
  );
}

export default function App() {
  return (
    <div className="flex h-[1080px] w-[1920px] flex-col overflow-hidden bg-white">
      <Defs />
      <div className="flex h-[29px] shrink-0 items-center">
        <svg width="18" height="19" viewBox="0 0 30 30" preserveAspectRatio="none" className="ml-[3px] mt-[-2px] block"><FusionLogo /></svg>
        <Fit w={267.5} className={`${SEGOE} ml-[6px] text-[14px] text-black`}>Autodesk Fusion 360 (Education License)</Fit>
        <Ic x={1762} y={4} w={140} h={21} className="ml-auto mr-[18px]">
          <g fill="none" stroke="#222" strokeWidth="1.200">
            <path d="M1765 14.500h12" />
            <path d="M1824 12.500h8.500v8h-8.500zM1826.500 12v-2.500h8.500v8.500h-2.500" />
            <path d="M1882.500 8.500l11.500 11.500M1894 8.500l-11.500 11.500" />
          </g>
        </Ic>
      </div>

      <div className="flex h-[49px] shrink-0 items-end bg-[#56738f]">
        <div className="ml-[26px] flex h-[39px] w-[248px] items-center rounded-t-[4px] bg-[#f2f2f5]">
          <Ic x={38} y={46} w={22} h={21} className="mb-[4px] ml-[12px]">
            <path d="M38.500 49l10-2.500 11 2.500v12l-9.500 5-11.500-5z" fill="#5a5a5a" />
            <path d="M39.500 51l10 2.500v11l-10-4.500z" fill="#b4b4b4" />
          </Ic>
          <Fit w={59.5} className={`${ARIAL} ml-[11px] mt-[3px] text-[15px] font-bold text-[#777]`}>Untitled*</Fit>
          <Ic x={249} y={52} w={14} h={14} className="ml-auto mr-[11px] mt-[1px]">
            <path d="M251 54l10 10M261 54l-10 10" stroke="#8a8a8a" strokeWidth="3" />
          </Ic>
        </div>
        <div className="ml-[3px] flex h-[39px] w-[36px] items-center justify-center rounded-t-[4px] bg-[#455c73]">
          <svg width="14" height="14" viewBox="0 0 14 14" className="mr-[1px] block"><path d="M7 0v14M0 7h14" stroke="#8d99a6" strokeWidth="2" /></svg>
        </div>
      </div>

      <div className="flex h-[33px] shrink-0 items-center border-b border-[#e4e4e4] bg-[#f0f0f0]">
        <Ic x={15} y={83} w={22} h={22} className="ml-[15px]">
          <path d="M15 83h6v6h-6zM22.500 83h6v6h-6zM30 83h6v6h-6zM15 90.500h6v6h-6zM22.500 90.500h6v6h-6zM30 90.500h6v6h-6zM15 98h6v6h-6zM22.500 98h6v6h-6zM30 98h6v6h-6z" fill="#4d4d4d" />
        </Ic>
        <Ic x={67} y={83} w={18} h={22} className="ml-[30px]">
          <path d="M67 84h10v6.500h7v13.500h-17zM78.500 84l5.500 5.500h-5.500z" fill="#4d4d4d" />
        </Ic>
        <Caret className="ml-[6px] text-[#444]" />
        <Ic x={129} y={83} w={22} h={22} className="ml-[30px]">
          <path d="M130 84h20v20h-18l-2-2z" fill="#4d4d4d" />
          <path d="M133.500 85.500h13v8h-13zM135 97.500h10v5h-10z" fill="#f0f0f0" />
          <path d="M137 99h2v2.500h-2z" fill="#4d4d4d" />
        </Ic>
        <Ic x={180} y={83} w={23} h={22} className="ml-[29px]">
          <path d="M180.500 93.500l9-6.500v4q12 .5 12 9-4-4-12-3.500v4z" fill="#444" />
        </Ic>
        <Caret className="ml-[7px] text-[#444]" />
        <Ic x={235} y={83} w={23} h={22} className="ml-[17px]">
          <path d="M257 93.500l-9-6.500v4q-12 .5-12 9 4-4 12-3.500v4z" fill="#999" />
        </Ic>
        <Caret className="ml-[7px] text-[#888]" />
        <Ic x={1634} y={83} w={22} h={22} className="ml-auto">
          <path d="M1635 85.500h20v13h-2.500l.5 5-4.500-5h-13.500z" fill="#4d4d4d" />
          <path d="M1637.500 89h15M1637.500 92h15M1637.500 95h10" stroke="#eee" strokeWidth="1.200" />
        </Ic>
        <Ic x={1685} y={83} w={22} h={22} className="ml-[29px]">
          <circle cx="1696" cy="94" r="9" fill="#f4f4f4" stroke="#4d4d4d" strokeWidth="2.400" />
          <path d="M1695.500 88v6.500h5" fill="none" stroke="#4d4d4d" strokeWidth="2.200" />
        </Ic>
        <Fit w={84.5} className={`${ARIAL} ml-[35px] text-[14px] text-[#505050]`}>Amal Johnson</Fit>
        <Caret className="ml-[7px] text-[#3a3a3a]" />
        <Ic x={1870} y={83} w={23} h={22} className="ml-[28px]">
          <circle cx="1881.300" cy="94" r="10.300" fill="#5a5a5a" />
          <text x="1881.300" y="100" textAnchor="middle" fontSize="17" fontWeight="bold" fill="#fff" className={ARIAL}>?</text>
        </Ic>
        <Caret className="ml-[4px] mr-[16px] text-[#3a3a3a]" />
      </div>

      <div className="relative h-[857px] shrink-0">
        <Canvas />
        <ViewCube />
        <div className="relative flex h-full flex-col">
          <Ribbon />
          <div className="flex flex-1 items-start justify-between">
            <Browser />
            <div className="mr-[4px] mt-[151px] flex h-[218px] w-[28px] flex-col items-center bg-[#f0f0f0]">
              <div className="flex h-[22px] w-full items-center justify-center bg-[#d2d2d2]">
                <Ic x={0} y={0} w={13} h={9} className="mr-[2px] mt-[2px]"><path d="M6.500 .5v8L0 4.500zM12.500 .5v8L6 4.500z" fill="#222" /></Ic>
              </div>
              <div className="flex h-[108px] w-full items-center justify-center pr-[3px]">
                <div className="rotate-90"><Fit w={103} className={`${ARIAL} text-[13px] text-[#4a4a4a]`}>SKETCH PALETTE</Fit></div>
              </div>
              <div className="mt-auto h-[13px] w-full bg-[#c8c8c8]" />
            </div>
          </div>
          <div className="mb-[6px] flex h-[31px] shrink-0 items-start">
            <div className="ml-[5px] flex h-[31px] w-[375px] items-center border border-t-0 border-[#c9c9c9] bg-[#f0f0f0]">
              <Fit w={71.5} className={`${ARIAL} ml-[31px] text-[14px] text-[#6e6e6e]`}>COMMENTS</Fit>
              <Ic x={0} y={0} w={12} h={12} className="ml-auto mr-[9px]">
                <circle cx="6" cy="6" r="5.800" fill="#2f2f2f" />
                <path d="M3 6h6M6 3v6" stroke="#fff" strokeWidth="1.500" />
              </Ic>
              <PanelBars />
              <span className="w-px" />
            </div>
            <NavBar />
            <Ic x={1886} y={936} w={24} h={24} className="ml-auto mr-[10px] mt-[5px]">
              <path d="M1898 940l9 16.500h-19z" fill="#f8d51c" stroke="#6d6320" strokeWidth="1.700" strokeLinejoin="round" />
              <path d="M1898 944.500v6M1898 952.500v2" stroke="#222" strokeWidth="2.200" />
            </Ic>
          </div>
        </div>
      </div>

      <div className="flex h-[62px] shrink-0 items-center border-t-2 border-[#cbcbcb] bg-[#f0f0f0]">
        <Ic x={12} y={980} w={210} h={44} className="ml-[12px] mt-[4px]">
          <g fill="#4a4a4a">
            <path d="M14 991h2.200v18h-2.200zM29 991.500v17l-12-8.500z" />
            <path d="M56.500 992v16L44 1000zM57.700 996h2v8h-2z" />
            <path d="M76 990.500l14.500 9.500-14.500 9.500z" />
            <path d="M110 992v16l12.500-8zM106.500 996h2v8h-2z" />
            <path d="M139 991.500v17l12-8.500zM151.500 991h2.200v18h-2.200z" />
          </g>
          <rect x="183" y="989" width="19" height="19.500" fill="#d5e5f6" stroke="#1e2f48" strokeWidth="1.800" />
          <path d="M187 993v11.500h11" fill="none" stroke="#1f4379" strokeWidth="2" />
          <path d="M187.500 1003l2-6 10-9 4 3-11 11z" fill="#fbc31f" stroke="#7c5a1a" strokeWidth=".8" />
          <path d="M200 981.500h15v5l-5.800 5h-3.400l-5.800-5z" fill="#606060" />
          <path d="M207.500 990v31" stroke="#606060" strokeWidth="2.200" />
          <path d="M193.500 1012.500v9" stroke="#ccc" strokeWidth="2" />
        </Ic>
        <div className="ml-auto mr-[16px]"><Gear size={20} /></div>
      </div>

      <Taskbar />
    </div>
  );
}
